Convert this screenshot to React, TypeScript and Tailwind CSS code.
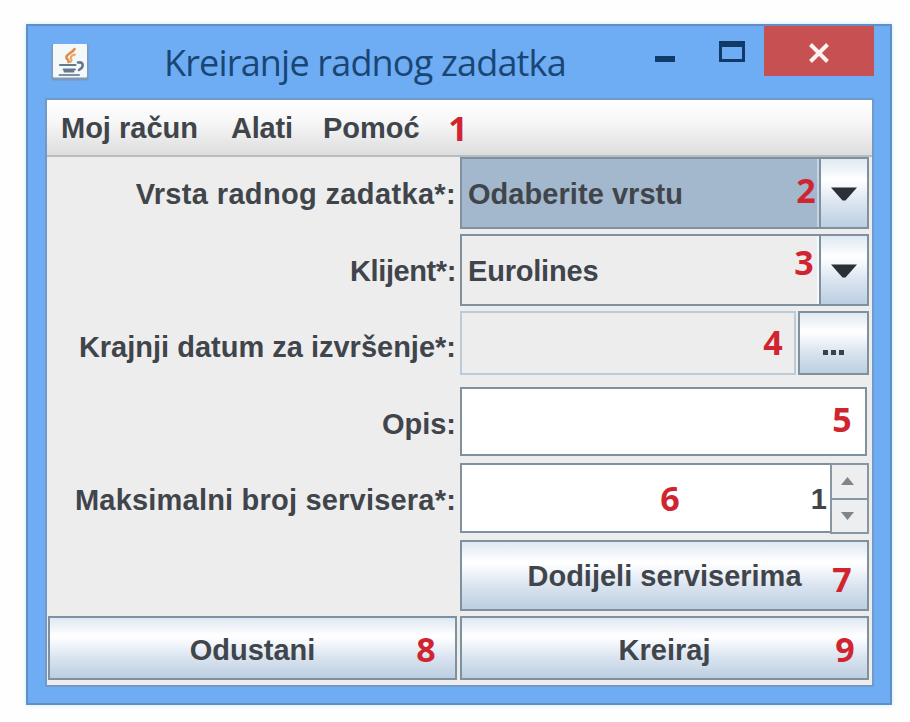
import type { ReactNode } from 'react';

const metal = 'bg-[linear-gradient(180deg,#dfe8f2_0%,#ffffff_30%,#f4f7fb_42%,#dae4f0_65%,#bccfe1_100%)]';
const frame = 'border-2 border-[#7f909f]';

function Mark({ n, at }: { n: number; at: string }) {
  return (
    <span className={`absolute z-10 w-5 text-center font-['Open_Sans',sans-serif] text-[34px] leading-[34px] font-bold text-[#d02531] ${at}`}>
      {n}
    </span>
  );
}

function Label({ children, track, pad = 'pt-0' }: { children: ReactNode; track: string; pad?: string }) {
  return (
    <div className={`flex w-[413px] shrink-0 items-center justify-end pr-[4px] ${pad}`}>
      <span className={track}>{children}</span>
    </div>
  );
}

function Combo({ text, track, selected, mark }: { text: string; track: string; selected?: boolean; mark: ReactNode }) {
  return (
    <div className={`relative flex h-[72px] w-[409px] ${frame}`}>
      <div className={`flex flex-1 items-center border-r-2 pl-[6px] pt-[2px] ${selected ? 'border-[#c4d4e5] bg-[#a3b8cc]' : 'border-[#f7fafc] bg-[#ededed]'}`}>
        <span className={track}>{text}</span>
      </div>
      <div className={`flex w-[48px] items-center justify-center border-l-2 border-[#7f909f] ${metal}`}>
        <svg width="26" height="14" viewBox="0 0 26 14" className="mt-[2px]">
          <path d="M0 0.5H26L14.5 13.5H11.5Z" fill="#2b3037" />
        </svg>
      </div>
      {mark}
    </div>
  );
}

function JavaIcon() {
  return (
    <svg width="38" height="38" viewBox="0 0 38 38" className="block">
      <rect x="0.5" y="1" width="37" height="36.5" rx="2" fill="#7d98b8" />
      <rect x="2" y="1" width="34" height="33.5" rx="1" fill="#f5f8f9" />
      <g fill="none" strokeLinecap="round">
        <path d="M23.5 6C22 10 14 11 15.5 15C16.2 16.700 18.500 17 17.500 19" stroke="#e58b45" strokeWidth="2.600" />
        <path d="M24 11.500C20 12.500 18.500 14.500 20.500 16.500C21 17.500 20 18.500 19.500 19" stroke="#e9a267" strokeWidth="2" />
        <path d="M9 22H24.500" stroke="#64798f" strokeWidth="2.200" />
        <path d="M27 19.500C32 18.500 34 23.500 28 27" stroke="#64798f" strokeWidth="2.600" />
        <path d="M12.500 26.500H24M13.500 28.500H22.500" stroke="#64798f" strokeWidth="1.800" />
        <path d="M8.500 32H28" stroke="#7f90a3" strokeWidth="2" />
      </g>
    </svg>
  );
}

export default function App() {
  return (
    <div className="h-[722px] w-[910px] overflow-hidden bg-[#fefefe] pl-[26px] pt-[24px] font-['Liberation_Sans',Arial,sans-serif] text-[29px] leading-[34px] font-bold whitespace-nowrap text-[#40454b]">
      <div className="flex h-[681px] w-[866px] flex-col border-2 border-[#5f8fc4] bg-[#6eadf4] shadow-[0_0_5px_#c9e9fb]">
        <header className="flex h-[72px] shrink-0 items-start">
          <div className="ml-[23px] mt-[17px] w-[38px]"><JavaIcon /></div>
          <h1 className="ml-[75px] mt-[12px] w-[409px] font-['Open_Sans',sans-serif] text-[36px] leading-[50px] font-normal tracking-[-0.82px] text-[#194675]">
            Kreiranje radnog zadatka
          </h1>
          <div className="ml-[82px] mt-[30px] h-[6px] w-[20px] bg-[#113a68]" />
          <div className="ml-[44px] mt-[15px] h-[21px] w-[26px] border-[3px] border-t-[6px] border-[#113a68]" />
          <div className="ml-[19px] flex h-[50px] w-[110px] items-center justify-center bg-[#c75052]">
            <svg width="22" height="20" viewBox="0 0 22 20" className="mt-[4px]">
              <path d="M2.500 1.500L19.500 18.500M19.500 1.500L2.500 18.500" stroke="#fff3ef" strokeWidth="4" />
            </svg>
          </div>
        </header>

        <main className="ml-[17px] flex h-[589px] w-[829px] shrink-0 flex-col border-2 border-[#6f9aca] bg-[#ededed]">
          <nav className="relative flex h-[57px] shrink-0 items-center border-b-2 border-[#b9bcbf] bg-[linear-gradient(180deg,#ffffff_0%,#f7f7f7_40%,#dddddd_100%)] pl-[14px]">
            <span className="w-[170px]">Moj račun</span>
            <span className="w-[92px] tracking-[-0.2px]">Alati</span>
            <span>Pomoć</span>
            <Mark n={1} at="left-[401px] top-[11px]" />
          </nav>

          <section className="flex w-[825px] flex-col">
            <div className="flex h-[72px]">
              <Label track="tracking-[0.35px]" pad="pt-[2px]">Vrsta radnog zadatka*:</Label>
              <Combo text="Odaberite vrstu" track="tracking-[0.05px]" selected mark={<Mark n={2} at="left-[334px] top-[14px]" />} />
            </div>
            <div className="mt-[5px] flex h-[72px]">
              <Label track="tracking-[-0.4px]" pad="pt-[2px]">Klijent*:</Label>
              <Combo text="Eurolines" track="tracking-[-0.2px]" mark={<Mark n={3} at="left-[332px] top-[9px]" />} />
            </div>
            <div className="mt-[5px] flex h-[64px]">
              <Label track="tracking-[0px]" pad="pt-[8px]">Krajnji datum za izvršenje*:</Label>
              <div className="relative h-[64px] w-[336px] border-2 border-[#bccbd9] bg-[#ededed]">
                <Mark n={4} at="left-[301px] top-[12px]" />
              </div>
              <div className={`ml-[2px] flex w-[71px] items-center justify-center gap-[3px] pt-[18px] ${frame} ${metal}`}>
                <i className="h-[5px] w-[5px] bg-[#3b4148]" />
                <i className="h-[5px] w-[5px] bg-[#3b4148]" />
                <i className="h-[5px] w-[5px] bg-[#3b4148]" />
              </div>
            </div>
            <div className="mt-[12px] flex h-[69px]">
              <Label track="tracking-[0px]" pad="pt-[4px]">Opis:</Label>
              <div className={`relative w-[407px] bg-white ${frame}`}>
                <Mark n={5} at="left-[370px] top-[13px]" />
              </div>
            </div>
            <div className="mt-[7px] flex h-[71px]">
              <Label track="tracking-[0.2px]" pad="pt-[3px]">Maksimalni broj servisera*:</Label>
              <div className={`relative flex h-[70px] w-[370px] items-center justify-end border-r-0 bg-white pr-[3px] pt-[2px] ${frame}`}>
                <Mark n={6} at="left-[198px] top-[16px]" />
                <span>1</span>
              </div>
              <div className="flex w-[39px] flex-col gap-[2px] border-2 border-[#8997a5] bg-[#8997a5]">
                <div className="flex flex-1 items-center justify-center bg-[#eceef0] pr-[5px]">
                  <svg width="13" height="8" viewBox="0 0 13 8"><path d="M0 8L6.500 0L13 8Z" fill="#7d858d" /></svg>
                </div>
                <div className="flex flex-1 items-center justify-center bg-[#eceef0] pr-[5px]">
                  <svg width="13" height="8" viewBox="0 0 13 8"><path d="M0 0L6.500 8L13 0Z" fill="#7d858d" /></svg>
                </div>
              </div>
            </div>
            <button className={`relative ml-[413px] mt-[6px] flex h-[71px] w-[409px] items-center justify-center ${frame} ${metal}`}>
              <span>Dodijeli serviserima</span>
              <Mark n={7} at="left-[370px] top-[20px]" />
            </button>
            <div className="mt-[5px] flex h-[64px] gap-[3px] pl-px">
              <button className={`relative flex w-[409px] items-center justify-center pt-[4px] ${frame} ${metal}`}>
                <span>Odustani</span>
                <Mark n={8} at="left-[366px] top-[14px]" />
              </button>
              <button className={`relative flex w-[409px] items-center justify-center pt-[4px] ${frame} ${metal}`}>
                <span>Kreiraj</span>
                <Mark n={9} at="left-[373px] top-[14px]" />
              </button>
            </div>
          </section>
        </main>
      </div>
    </div>
  );
}
